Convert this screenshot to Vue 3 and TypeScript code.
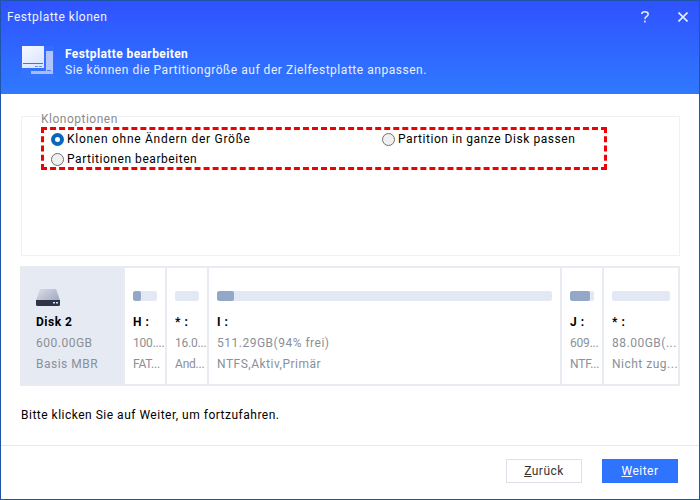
<template>
  <div class="dialog">
    <header class="banner">
      <div class="titlebar">
        <span class="title">Festplatte klonen</span>
        <div class="window-actions">
          <svg width="8" height="12" viewBox="0 0 8 12" fill="none" stroke="#e8eeff" stroke-width="1.5">
            <path d="M0.8 3C0.8 1.6 2 0.8 3.8 0.8C5.8 0.8 7.2 1.7 7.2 3.2C7.2 5.4 3.9 5.2 3.9 8" />
            <path d="M3.9 9.6V11.6" />
          </svg>
          <svg width="10" height="10" viewBox="0 0 10 10" fill="none" stroke="#e8eeff" stroke-width="1.6">
            <path d="M0.5 0.5L9.5 9.5M9.5 0.5L0.5 9.5" />
          </svg>
        </div>
      </div>
      <div class="banner-body">
        <svg class="banner-icon" width="32" height="32" viewBox="0 0 32 32">
          <defs>
            <linearGradient id="screen" x1="0" y1="0" x2="0.6" y2="1">
              <stop offset="0" stop-color="#f7f9ff" />
              <stop offset="1" stop-color="#dbe5ff" />
            </linearGradient>
          </defs>
          <rect x="0" y="0" width="32" height="32" fill="#3f78ff" opacity="0.35" />
          <rect x="24" y="5" width="7" height="23" fill="#b2c6fb" />
          <rect x="9" y="25" width="22" height="3" fill="#a5bdf9" />
          <rect x="0" y="0" width="22" height="22" fill="url(#screen)" />
          <rect x="1" y="17" width="20" height="1" fill="#3f74ef" />
          <rect x="13" y="20" width="3" height="1" fill="#6f95ee" />
          <rect x="17" y="20" width="3" height="1" fill="#6f95ee" />
          <rect x="25" y="24" width="4" height="1" fill="#4f80f0" />
        </svg>
        <div>
          <div class="heading">Festplatte bearbeiten</div>
          <div class="subheading">Sie können die Partitiongröße auf der Zielfestplatte anpassen.</div>
        </div>
      </div>
    </header>

    <main class="content">
      <section class="options">
        <h2 class="legend">Klonoptionen</h2>
        <div class="choices">
          <label v-for="opt in options" :key="opt.label" class="choice">
            <span class="radio" :class="{ checked: opt.checked }"></span>
            {{ opt.label }}
          </label>
        </div>
      </section>

      <div class="disk">
        <div class="disk-info">
          <svg width="24" height="17" viewBox="0 0 24 17">
            <defs>
              <linearGradient id="drive" x1="0" y1="0" x2="1" y2="0.6">
                <stop offset="0" stop-color="#dcdfea" />
                <stop offset="1" stop-color="#a9afc6" />
              </linearGradient>
            </defs>
            <path d="M4 0H20L24 11H0Z" fill="url(#drive)" />
            <path d="M0 11H24V15.5Q24 17 22.5 17H1.5Q0 17 0 15.5Z" fill="#2f3447" />
            <rect x="17" y="13" width="2" height="1.5" fill="#cfe0ff" />
            <rect x="20" y="13" width="2" height="1.5" fill="#cfe0ff" />
          </svg>
          <div class="disk-name">Disk 2</div>
          <div class="muted">600.00GB</div>
          <div class="muted">Basis MBR</div>
        </div>
        <div
          v-for="part in partitions"
          :key="part.id"
          class="partition"
          :class="part.size"
        >
          <div class="bar">
            <div class="fill" :style="{ width: part.used + '%' }"></div>
          </div>
          <div class="part-name">{{ part.name }}</div>
          <div class="muted clip">{{ part.capacity }}</div>
          <div class="muted clip">{{ part.info }}</div>
        </div>
      </div>

      <p class="hint">Bitte klicken Sie auf Weiter, um fortzufahren.</p>
    </main>

    <footer class="footer">
      <button class="btn"><u>Z</u>urück</button>
      <button class="btn primary"><u>W</u>eiter</button>
    </footer>
  </div>
</template>

<script setup lang="ts">
interface Option {
  label: string
  checked: boolean
}

interface Partition {
  id: number
  name: string
  capacity: string
  info: string
  used: number
  size: string
}

const options: Option[] = [
  { label: 'Klonen ohne Ändern der Größe', checked: true },
  { label: 'Partition in ganze Disk passen', checked: false },
  { label: 'Partitionen bearbeiten', checked: false },
]

const partitions: Partition[] = [
  { id: 1, name: 'H :', capacity: '100....', info: 'FAT...', used: 33, size: 'small' },
  { id: 2, name: '* :', capacity: '16.0...', info: 'And...', used: 0, size: 'small' },
  { id: 3, name: 'I :', capacity: '511.29GB(94% frei)', info: 'NTFS,Aktiv,Primär', used: 5, size: 'large' },
  { id: 4, name: 'J :', capacity: '609...', info: 'NTF...', used: 83, size: 'small' },
  { id: 5, name: '* :', capacity: '88.00GB(...', info: 'Nicht zug...', used: 0, size: 'medium' },
]
</script>

<style>
html,
body {
  margin: 0;
  background: #fff;
}
</style>

<style scoped>
.dialog {
  width: 700px;
  height: 500px;
  box-sizing: border-box;
  border: 1px solid #1f55a8;
  display: flex;
  flex-direction: column;
  background: #fff;
  font-family: "Roboto", "Liberation Sans", sans-serif;
  font-size: 12px;
  letter-spacing: 0.5px;
  color: #111;
}

.banner {
  height: 93px;
  flex: none;
  background: linear-gradient(#2f52ff, #2f79ff);
  color: #fff;
}

.titlebar {
  height: 32px;
  display: flex;
  align-items: center;
  justify-content: space-between;
  padding: 0 11px 0 6px;
}

.window-actions {
  display: flex;
  align-items: center;
  gap: 29px;
}

.title {
  color: #eef3ff;
}

.banner-body {
  display: flex;
  align-items: flex-start;
  gap: 11px;
  padding: 13px 0 0 21px;
}

.banner-icon {
  flex: none;
}

.heading {
  font-weight: 700;
  line-height: 17px;
  letter-spacing: 0.4px;
}

.subheading {
  line-height: 15px;
  letter-spacing: 0.535px;
  color: #e8eeff;
}

.content {
  flex: 1;
  padding: 0 19px;
}

.options {
  position: relative;
  margin: 22px 0 0 1px;
  height: 140px;
  box-sizing: border-box;
  padding: 10px 0 0 19px;
  border: 1px solid #eef1f6;
}

.legend {
  position: absolute;
  top: -5px;
  left: 19px;
  margin: 0;
  padding: 0;
  background: #fff;
  color: #8b8b8b;
  font-size: 12px;
  font-weight: 400;
  line-height: 15px;
}

.choices {
  width: 566px;
  height: 43px;
  box-sizing: border-box;
  border: 3px dashed #f00000;
  padding: 0 0 0 7px;
  display: grid;
  grid-template-columns: 331px 1fr;
  grid-template-rows: 18px 22px;
}

.choice {
  display: flex;
  align-items: center;
  gap: 3px;
  color: #000;
  letter-spacing: 0.55px;
}

.choice:first-child {
  letter-spacing: 0.73px;
}

.radio {
  width: 13px;
  height: 13px;
  box-sizing: border-box;
  border-radius: 50%;
  border: 1px solid #6f6f6f;
  background: #f0f0f0;
}

.radio.checked {
  border: 4px solid #0a66b8;
  background: #fff;
}

.disk {
  margin-top: 10px;
  height: 120px;
  box-sizing: border-box;
  border: 2px solid #e8ecf2;
  display: flex;
  gap: 2px;
  background: #e8ecf2;
}

.disk-info {
  width: 101px;
  box-sizing: border-box;
  padding: 21px 0 0 14px;
  background: #e6eaf3;
}

.disk-info svg {
  display: block;
  margin-bottom: 6px;
}

.disk-name {
  font-weight: 700;
  line-height: 21px;
  color: #000;
}

.partition {
  box-sizing: border-box;
  padding: 23px 0 0 8px;
  background: #fff;
  overflow: hidden;
}

.partition.small {
  width: 40px;
}

.partition.small .clip {
  letter-spacing: -0.2px;
}

.partition.large {
  flex: 1;
}

.partition.medium {
  width: 74px;
}

.bar {
  height: 10px;
  width: calc(100% - 8px);
  background: #e3e9f4;
  border-radius: 2px;
  overflow: hidden;
}

.fill {
  height: 100%;
  background: #93a8c8;
  border-radius: 2px;
}

.part-name {
  margin-top: 11px;
  font-weight: 700;
  line-height: 21px;
  color: #000;
}

.muted {
  color: #8a8f98;
  line-height: 21px;
}

.clip {
  white-space: nowrap;
}

.hint {
  margin: 21px 0 0 1px;
  line-height: 16px;
  color: #000;
}

.footer {
  height: 54px;
  flex: none;
  box-sizing: border-box;
  border-top: 1px solid #e8e8e8;
  display: flex;
  justify-content: flex-end;
  gap: 20px;
  padding: 13px 21px 0 0;
}

.btn {
  width: 76px;
  height: 24px;
  padding: 0;
  border: 1px solid #dbe0ea;
  background: #fff;
  color: #333;
  font: inherit;
  letter-spacing: inherit;
}

.btn.primary {
  border-color: #2f74ff;
  background: #2f74ff;
  color: #fff;
}
</style>
